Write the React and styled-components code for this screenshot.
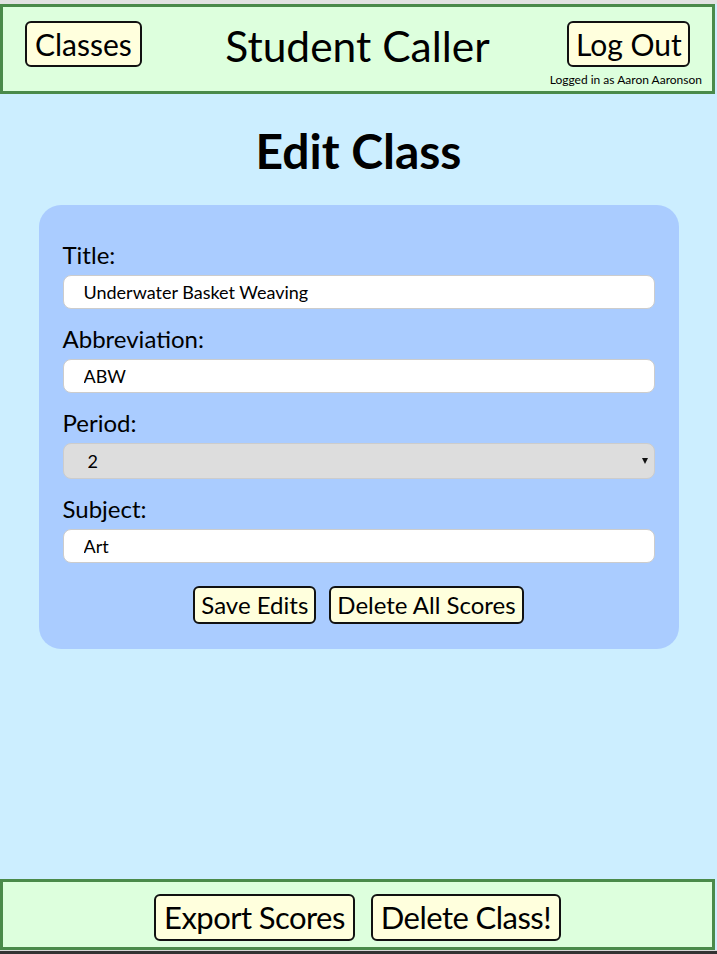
import React from "react";
import styled, { createGlobalStyle } from "styled-components";

const Global = createGlobalStyle`
  html, body { margin: 0; padding: 0; }
  body { background: #cceeff; font-family: Lato, "Open Sans", sans-serif; color: #000; }
  * { box-sizing: border-box; }
`;

const Page = styled.div`
  min-height: 954px;
  display: flex;
  flex-direction: column;
`;

const TopStrip = styled.div`
  height: 4px;
  background: #e2e2e2;
`;

const Bar = styled.div`
  background: #ddffdd;
  border: 3px solid #4a8a4a;
  width: 715px;
`;

const Header = styled(Bar)`
  display: grid;
  grid-template-columns: 1fr auto 1fr;
  align-items: start;
  padding: 14px 10px 5px 10px;
`;

const Footer = styled(Bar)`
  display: flex;
  justify-content: center;
  gap: 16px;
  padding: 12px 0 6px;
`;

const BottomStrip = styled.div`
  height: 4px;
  border-top: 1px solid #d8d8d8;
  background: #333;
`;

const Btn = styled.button`
  font-family: Lato, "Open Sans", sans-serif;
  font-size: ${(p) => p.$size}px;
  letter-spacing: ${(p) => p.$ls || 0}px;
  height: ${(p) => p.$h}px;
  padding: 0 ${(p) => p.$px}px;
  margin-left: ${(p) => p.$shift || 0}px;
  background: #ffffdd;
  color: #000;
  border: 2px solid #111;
  border-radius: 6px;
  line-height: 1;
  cursor: pointer;
`;

const Title = styled.div`
  font-size: 42.5px;
  line-height: 1;
  padding-top: 4px;
  text-align: center;
  white-space: nowrap;
`;

const Left = styled.div`
  justify-self: start;
  padding-left: 12px;
`;

const Right = styled.div`
  justify-self: end;
  display: flex;
  flex-direction: column;
  align-items: center;
  gap: 6px;
`;

const Small = styled.div`
  font-size: 12px;
  line-height: 13px;
`;

const Main = styled.main`
  flex: 1;
  display: flex;
  flex-direction: column;
  align-items: center;
`;

const H1 = styled.h1`
  font-size: 48px;
  font-weight: 700;
  margin: 28px 0 25px;
  line-height: 1.2;
`;

const Card = styled.form`
  width: 640px;
  background: #aaccff;
  border-radius: 22px;
  padding: 35px 24px 25px;
  display: flex;
  flex-direction: column;
  gap: 15px;
`;

const Field = styled.div`
  display: flex;
  flex-direction: column;
  gap: 6px;
`;

const Label = styled.label`
  font-size: 24px;
  line-height: 29px;
`;

const Input = styled.input`
  height: 34px;
  border: 1px solid #cccccc;
  border-radius: 8px;
  background: #fff;
  font-family: Lato, "Open Sans", sans-serif;
  font-size: 18px;
  padding: 0 20px;
  color: #000;
`;

const SelectWrap = styled.div`
  position: relative;
  display: flex;
  flex-direction: column;
`;

const Select = styled.select`
  appearance: none;
  -webkit-appearance: none;
  height: 36px;
  border: 1px solid #cccccc;
  border-radius: 8px;
  background-color: #dddddd;
  font-family: Lato, "Open Sans", sans-serif;
  font-size: 18px;
  padding: 0 24px;
  color: #000;
`;

const Arrow = styled.span`
  position: absolute;
  right: 7px;
  top: 15px;
  width: 0;
  height: 0;
  border-left: 3.5px solid transparent;
  border-right: 3.5px solid transparent;
  border-top: 6px solid #111;
  pointer-events: none;
`;

const Actions = styled.div`
  display: flex;
  justify-content: center;
  gap: 13px;
  margin-top: 8px;
`;

export default function App() {
  return (
    <>
      <Global />
      <Page>
        <TopStrip />
        <Header>
          <Left>
            <Btn $size={30} $h={46} $px={8}>Classes</Btn>
          </Left>
          <Title>Student Caller</Title>
          <Right>
            <Btn $size={30} $h={46} $px={6.5} $shift={6}>Log Out</Btn>
            <Small>Logged in as Aaron Aaronson</Small>
          </Right>
        </Header>
        <Main>
          <H1>Edit Class</H1>
          <Card onSubmit={(e) => e.preventDefault()}>
            <Field>
              <Label>Title:</Label>
              <Input defaultValue="Underwater Basket Weaving" />
            </Field>
            <Field>
              <Label>Abbreviation:</Label>
              <Input defaultValue="ABW" />
            </Field>
            <Field>
              <Label>Period:</Label>
              <SelectWrap>
                <Select defaultValue="2">
                  <option value="1">1</option>
                  <option value="2">2</option>
                  <option value="3">3</option>
                </Select>
                <Arrow />
              </SelectWrap>
            </Field>
            <Field>
              <Label>Subject:</Label>
              <Input defaultValue="Art" />
            </Field>
            <Actions>
              <Btn type="button" $size={24} $h={38} $px={6}>Save Edits</Btn>
              <Btn type="button" $size={24} $h={38} $px={6}>Delete All Scores</Btn>
            </Actions>
          </Card>
        </Main>
        <Footer>
          <Btn $size={31} $ls={-0.55} $h={47} $px={8}>Export Scores</Btn>
          <Btn $size={31} $ls={-0.55} $h={47} $px={8}>Delete Class!</Btn>
        </Footer>
        <BottomStrip />
      </Page>
    </>
  );
}
